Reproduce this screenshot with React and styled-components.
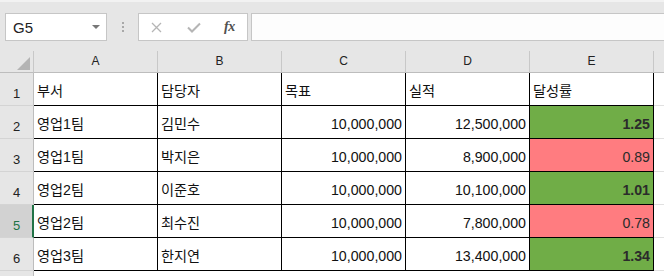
import styled, { createGlobalStyle } from 'styled-components'

const GlobalStyle = createGlobalStyle`
    html, body {
        margin: 0;
        padding: 0;
        background: #fff;
        overflow: hidden;
    }
    body {
        font-family: "Liberation Sans", "Noto Sans CJK KR", sans-serif;
    }
`

const Page = styled.div`
    width: 664px;
    height: 276px;
    display: flex;
    flex-direction: column;
    background: #fff;
`

const TopArea = styled.div`
    height: 51px;
    box-sizing: border-box;
    background: #e6e6e6;
    border-top: 2px solid #f2f2f2;
    padding: 11px 0 10px 5px;
    display: flex;
    align-items: stretch;
`

const NameBox = styled.div`
    width: 102px;
    box-sizing: border-box;
    background: #fff;
    border: 1px solid #c6c6c6;
    display: flex;
    align-items: center;
    justify-content: space-between;
    padding: 0 6px 0 7px;
    font-size: 15px;
    color: #222;
`

const DropArrow = styled.span`
    width: 0;
    height: 0;
    border-left: 4px solid transparent;
    border-right: 4px solid transparent;
    border-top: 4px solid #777;
`

const Dots = styled.div`
    width: 31px;
    display: flex;
    flex-direction: column;
    align-items: center;
    justify-content: center;
    gap: 2px;
    span {
        width: 2px;
        height: 2px;
        background: #a8a8a8;
    }
`

const ButtonBox = styled.div`
    width: 110px;
    box-sizing: border-box;
    background: #fff;
    border: 1px solid #c6c6c6;
    display: flex;
    align-items: center;
    padding-left: 12px;
`

const IconSlot = styled.div`
    width: ${(p) => p.$w || 37}px;
    display: flex;
    align-items: center;
    justify-content: flex-start;
`

const Fx = styled.span`
    font-family: "Liberation Serif", serif;
    font-style: italic;
    font-weight: 700;
    font-size: 14px;
    color: #505050;
    letter-spacing: -0.5px;
`

const FormulaInput = styled.div`
    flex: 1;
    margin-left: 3px;
    background: #fdfdfd;
    border: 1px solid #c6c6c6;
    border-right: none;
`

const Sheet = styled.div`
    display: grid;
    grid-template-columns: 34px repeat(5, 124px) 1fr;
    grid-template-rows: 22px repeat(6, 33px) 1fr;
    flex: 1;
`

const Corner = styled.div`
    background: #e6e6e6;
    border-right: 1px solid #c8c8c8;
    border-bottom: 1px solid #bdbdbd;
    position: relative;
    &::after {
        content: '';
        position: absolute;
        right: 3px;
        bottom: 2px;
        width: 0;
        height: 0;
        border-left: 13px solid transparent;
        border-bottom: 13px solid #b4b4b4;
    }
`

const ColHead = styled.div`
    background: #e6e6e6;
    border-right: 1px solid ${(p) => (p.$last ? 'transparent' : '#c8c8c8')};
    border-bottom: 1px solid #bdbdbd;
    display: flex;
    align-items: center;
    justify-content: center;
    font-size: 12px;
    color: #222;
    padding-bottom: 1px;
`

const RowHead = styled.div`
    background: ${(p) => (p.$active ? '#d2d2d2' : '#e6e6e6')};
    border-right: ${(p) => (p.$active ? '2px solid #217346' : '1px solid #bdbdbd')};
    border-bottom: 1px solid #d4d4d4;
    display: flex;
    align-items: flex-end;
    justify-content: center;
    padding-bottom: 4px;
    padding-left: ${(p) => (p.$active ? '1px' : '0')};
    font-size: 13px;
    color: ${(p) => (p.$active ? '#217346' : '#222')};
`

const fills = {
    good: '#70ad47',
    bad: '#ff7c80',
}

const Cell = styled.div`
    border-right: 1px solid #000;
    border-bottom: 1px solid #000;
    background: ${(p) => fills[p.$fill] || '#fff'};
    display: flex;
    align-items: flex-end;
    justify-content: ${(p) => (p.$right ? 'flex-end' : 'flex-start')};
    padding: 0 3px 5px 3px;
    font-size: 14.2px;
    line-height: 17px;
    font-weight: ${(p) => (p.$bold ? 700 : 400)};
    color: ${(p) => (p.$fill ? '#2b2b2b' : '#111')};
    white-space: nowrap;
    overflow: hidden;
`

const Filler = styled.div`
    background: ${(p) => (p.$head ? '#e6e6e6' : '#fff')};
    border-bottom: ${(p) => (p.$head ? '1px solid #bdbdbd' : '1px solid #e1e1e1')};
`

const BlankHead = styled.div`
    background: #e6e6e6;
    border-right: 1px solid #bdbdbd;
`

const rows = [
    ['부서', '담당자', '목표', '실적', '달성률'],
    ['영업1팀', '김민수', '10,000,000', '12,500,000', '1.25'],
    ['영업1팀', '박지은', '10,000,000', '8,900,000', '0.89'],
    ['영업2팀', '이준호', '10,000,000', '10,100,000', '1.01'],
    ['영업2팀', '최수진', '10,000,000', '7,800,000', '0.78'],
    ['영업3팀', '한지연', '10,000,000', '13,400,000', '1.34'],
]

const Row = ({ index, cells }) => {
    const ratio = parseFloat(cells[4])
    const isData = index > 0
    const good = isData && ratio >= 1
    return (
        <>
            <RowHead $active={index === 4}>{index + 1}</RowHead>
            <Cell>{cells[0]}</Cell>
            <Cell>{cells[1]}</Cell>
            <Cell $right={isData}>{cells[2]}</Cell>
            <Cell $right={isData}>{cells[3]}</Cell>
            <Cell $right={isData} $fill={isData ? (good ? 'good' : 'bad') : null} $bold={good}>
                {cells[4]}
            </Cell>
            <Filler />
        </>
    )
}

const App = () => {
    return (
        <Page>
            <GlobalStyle />
            <TopArea>
                <NameBox>
                    <span>G5</span>
                    <DropArrow />
                </NameBox>
                <Dots>
                    <span />
                    <span />
                    <span />
                </Dots>
                <ButtonBox>
                    <IconSlot $w={36}>
                        <svg width="11" height="11" viewBox="0 0 11 11">
                            <path d="M1 1L10 10M10 1L1 10" stroke="#b5b5b5" strokeWidth="1.3" fill="none" />
                        </svg>
                    </IconSlot>
                    <IconSlot $w={37}>
                        <svg width="14" height="11" viewBox="0 0 14 11">
                            <path d="M1 5.5L5 9.5L13 1.5" stroke="#b5b5b5" strokeWidth="2" fill="none" />
                        </svg>
                    </IconSlot>
                    <IconSlot $w={20}>
                        <Fx>fx</Fx>
                    </IconSlot>
                </ButtonBox>
                <FormulaInput />
            </TopArea>
            <Sheet>
                <Corner />
                {['A', 'B', 'C', 'D', 'E'].map((c) => (
                    <ColHead key={c}>{c}</ColHead>
                ))}
                <Filler $head />
                {rows.map((r, i) => (
                    <Row key={i} index={i} cells={r} />
                ))}
                <BlankHead />
            </Sheet>
        </Page>
    )
}

export default App
